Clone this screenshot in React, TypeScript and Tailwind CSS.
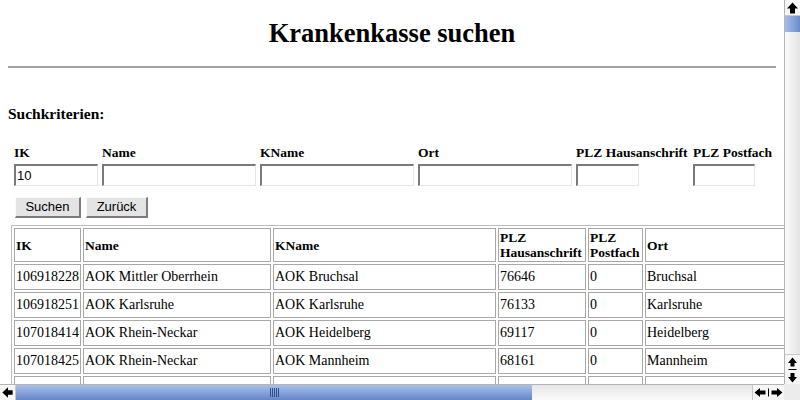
import React from "react";

function UpArrow() {
  return (
    <svg width="15" height="16" viewBox="0 0 15 16">
      <path d="M7.5 2.5 L13 8.5 L10 8.5 L10 13.5 L5 13.5 L5 8.5 L2 8.5 Z" fill="#000" />
    </svg>
  );
}

function LeftArrow() {
  return (
    <svg width="16" height="15" viewBox="0 0 16 15">
      <path d="M2.5 7.5 L8.5 2 L8.5 5 L13.5 5 L13.5 10 L8.5 10 L8.5 13 Z" fill="#000" />
    </svg>
  );
}

function VDouble() {
  return (
    <svg width="15" height="30" viewBox="0 0 15 30">
      <path d="M7.5 2.5 L12 8 L9.5 8 L9.5 11.5 L5.5 11.5 L5.5 8 L3 8 Z" fill="#000" />
      <rect x="3.5" y="14" width="8" height="1" fill="#000" />
      <path d="M7.5 27.5 L12 22 L9.5 22 L9.5 18 L5.5 18 L5.5 22 L3 22 Z" fill="#000" />
    </svg>
  );
}

function HDouble() {
  return (
    <svg width="31" height="15" viewBox="0 0 31 15">
      <path d="M1.5 7.5 L7 3 L7 5.5 L12.5 5.5 L12.5 9.5 L7 9.5 L7 12 Z" fill="#000" />
      <rect x="15" y="3.5" width="1" height="8" fill="#000" />
      <path d="M29.5 7.5 L24 3 L24 5.5 L18.5 5.5 L18.5 9.5 L24 9.5 L24 12 Z" fill="#000" />
    </svg>
  );
}

const labels = ["IK", "Name", "KName", "Ort", "PLZ Hausanschrift", "PLZ Postfach"];
const inputWidths = ["w-[84px]", "w-[154px]", "w-[154px]", "w-[154px]", "w-[63px]", "w-[62px]"];

const rows = [
  ["106918228", "AOK Mittler Oberrhein", "AOK Bruchsal", "76646", "0", "Bruchsal"],
  ["106918251", "AOK Karlsruhe", "AOK Karlsruhe", "76133", "0", "Karlsruhe"],
  ["107018414", "AOK Rhein-Neckar", "AOK Heidelberg", "69117", "0", "Heidelberg"],
  ["107018425", "AOK Rhein-Neckar", "AOK Mannheim", "68161", "0", "Mannheim"],
  ["", "", "", "", "", ""],
];

export default function App() {
  return (
    <div className="w-[800px] h-[400px] flex flex-col overflow-hidden bg-white text-black font-['Liberation_Serif','Times_New_Roman',serif]">
      <div className="flex h-[384px]">
        <div className="w-[784px] h-[384px] overflow-hidden">
          <h1 className="mt-[18px] text-center text-[26.5px] leading-[30px] font-bold">Krankenkasse suchen</h1>
          <div className="mx-[8px] mt-[18px] h-[2px] bg-[#a0a0a0]" />
          <div className="ml-[8px] mt-[37px] text-[15.5px] leading-[18px] font-bold">Suchkriterien:</div>

          <div className="ml-[14px] mt-[22px] grid grid-cols-[88px_158px_158px_158px_117px_90px] gap-y-[3px]">
            {labels.map((l) => (
              <div key={l} className="h-[16px] text-[13.5px] leading-[16px] font-bold whitespace-nowrap">
                {l}
              </div>
            ))}
            {inputWidths.map((w, i) => (
              <input
                key={i}
                defaultValue={i === 0 ? "10" : ""}
                className={`${w} h-[22px] border-t-2 border-l-2 border-r border-b border-t-[#7a7a7a] border-l-[#7a7a7a] border-r-[#e6e6e6] border-b-[#e6e6e6] bg-white px-[1px] text-[13px] font-['Liberation_Sans',Arial,sans-serif] outline-none`}
              />
            ))}
          </div>

          <div className="ml-[15px] mt-[11px] flex gap-[5px]">
            <button className="h-[21px] w-[66px] bg-[#e4e4e4] border-t border-l border-r-2 border-b-2 border-t-[#fafafa] border-l-[#fafafa] border-r-[#7c7c7c] border-b-[#7c7c7c] text-[13px] leading-[16px] font-['Liberation_Sans',Arial,sans-serif]">
              Suchen
            </button>
            <button className="h-[21px] w-[62px] bg-[#e4e4e4] border-t border-l border-r-2 border-b-2 border-t-[#fafafa] border-l-[#fafafa] border-r-[#7c7c7c] border-b-[#7c7c7c] text-[13px] leading-[16px] font-['Liberation_Sans',Arial,sans-serif]">
              Zurück
            </button>
          </div>

          <div className="ml-[11px] mt-[7px] w-max border border-[#bdbdbd] p-[2px]">
            <div className="grid grid-cols-[67px_188px_223px_88px_55px_200px] gap-[2px]">
              {["IK", "Name", "KName", "PLZ Hausanschrift", "PLZ Postfach", "Ort"].map((h) => (
                <div
                  key={h}
                  className="h-[34px] border border-[#a8a8a8] px-[1px] flex items-center text-[13.5px] leading-[15px] font-bold"
                >
                  {h.startsWith("PLZ") ? (
                    <span>
                      PLZ
                      <br />
                      {h.slice(4)}
                    </span>
                  ) : (
                    h
                  )}
                </div>
              ))}
              {rows.map((r, ri) =>
                r.map((c, ci) => (
                  <div
                    key={`${ri}-${ci}`}
                    className="h-[26px] border border-[#a8a8a8] px-[1px] flex items-center text-[14px] leading-[16px] whitespace-nowrap"
                  >
                    {c}
                  </div>
                ))
              )}
            </div>
          </div>
        </div>

        {/* vertical scrollbar */}
        <div className="w-[16px] h-[384px] flex flex-col border-l border-[#b4b4b4]">
          <div className="h-[16px] flex items-center justify-center bg-[#f6f6f6] border-b border-[#c8c8c8]">
            <UpArrow />
          </div>
          <div className="h-[16px] bg-linear-to-r from-[#a4bdea] to-[#6c8ccd]" />
          <div className="flex-1 bg-linear-to-r from-[#fbfbfb] to-[#e4e4e4]" />
          <div className="h-[30px] flex items-center justify-center bg-[#f6f6f6] border-t border-[#c8c8c8]">
            <VDouble />
          </div>
        </div>
      </div>

      {/* horizontal scrollbar */}
      <div className="flex h-[16px]">
        <div className="w-[784px] flex border-t border-[#b4b4b4]">
          <div className="w-[16px] flex items-center justify-center bg-[#f6f6f6] border-r border-[#c8c8c8]">
            <LeftArrow />
          </div>
          <div className="w-[516px] flex items-center justify-center bg-linear-to-b from-[#a8c0ea] to-[#6586c8]">
            <div className="flex gap-[1px] h-[9px]">
              {[0, 1, 2, 3, 4].map((i) => (
                <div key={i} className="w-[1px] h-full bg-[#2f4f8f]" />
              ))}
            </div>
          </div>
          <div className="flex-1 bg-linear-to-b from-[#e6e6e6] to-[#fbfbfb]" />
          <div className="w-[32px] flex items-center justify-center bg-[#f6f6f6] border-l border-[#c8c8c8]">
            <HDouble />
          </div>
        </div>
        <div className="w-[16px] bg-[#ececec]" />
      </div>
    </div>
  );
}
